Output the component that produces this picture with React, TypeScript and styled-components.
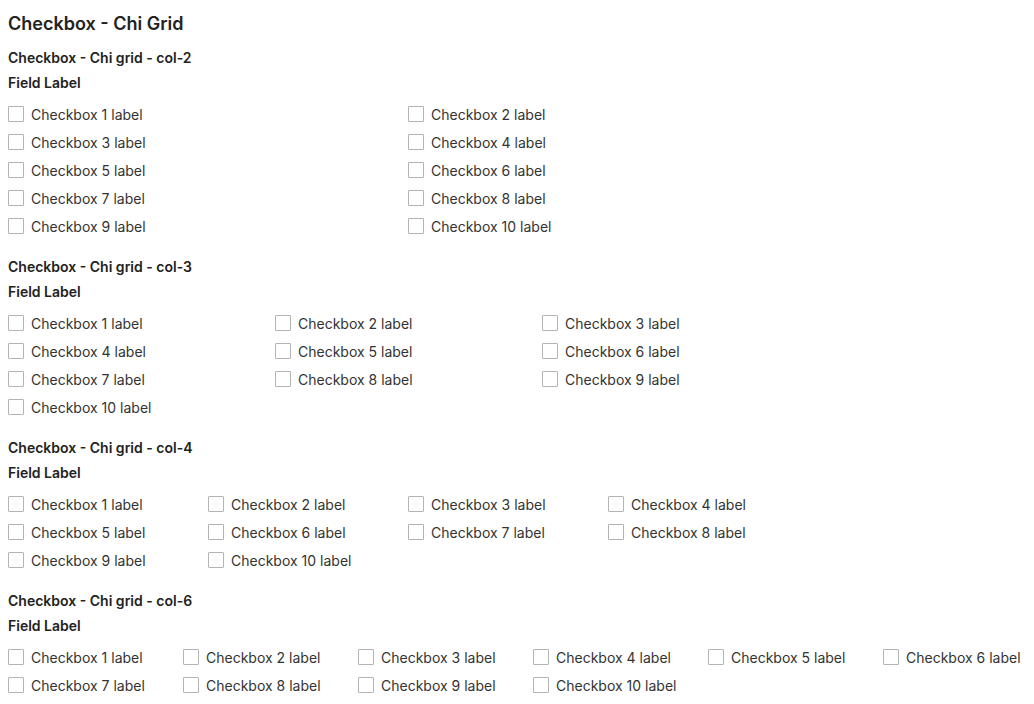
import React from "react";
import styled, {createGlobalStyle} from "styled-components";

const GlobalStyle = createGlobalStyle`
  html, body {
    margin: 0;
    padding: 0;
    background: #fff;
  }
  body {
    font-family: Inter, "Liberation Sans", sans-serif;
    color: #222;
  }
`

const Page = styled.div`
  padding: 12px 8px 0;
`

const Title = styled.h1`
  margin: 0 0 12px;
  font-size: 18px;
  line-height: 24px;
  font-weight: 600;
  color: #222;
`

const Section = styled.section`
  margin-bottom: 17px;
`

const Subtitle = styled.h2`
  margin: 0;
  font-size: 14px;
  line-height: 20px;
  font-weight: 600;
  color: #222;
`

const FieldLabel = styled.div`
  margin-top: 5px;
  font-size: 14px;
  line-height: 20px;
  font-weight: 600;
  color: #222;
`

const Grid = styled.div<{ colWidth: number; cols: number }>`
  margin-top: 7px;
  display: grid;
  grid-template-columns: repeat(${p => p.cols}, ${p => p.colWidth}px);
  grid-auto-rows: 28px;
`

const Item = styled.label`
  display: flex;
  align-items: center;
  gap: 7px;
  font-size: 14px;
  color: #333;
  white-space: nowrap;
  cursor: pointer;
`

const Box = styled.span`
  width: 16px;
  height: 16px;
  box-sizing: border-box;
  border: 1px solid #b3b3b3;
  border-radius: 1px;
  background: #fff;
  flex-shrink: 0;
`

const sections = [
    {name: "col-2", cols: 2, width: 400},
    {name: "col-3", cols: 3, width: 267},
    {name: "col-4", cols: 4, width: 200},
    {name: "col-6", cols: 6, width: 175},
]

function App() {
    const items = Array.from({length: 10}, (_, i) => i + 1)
    return (
        <Page>
            <GlobalStyle/>
            <Title>Checkbox - Chi Grid</Title>
            {sections.map(s =>
                <Section key={s.name}>
                    <Subtitle>Checkbox - Chi grid - {s.name}</Subtitle>
                    <FieldLabel>Field Label</FieldLabel>
                    <Grid cols={s.cols} colWidth={s.width}>
                        {items.map(n =>
                            <Item key={n}>
                                <Box/>
                                <span>Checkbox {n} label</span>
                            </Item>
                        )}
                    </Grid>
                </Section>
            )}
        </Page>
    );
}

export default App;
